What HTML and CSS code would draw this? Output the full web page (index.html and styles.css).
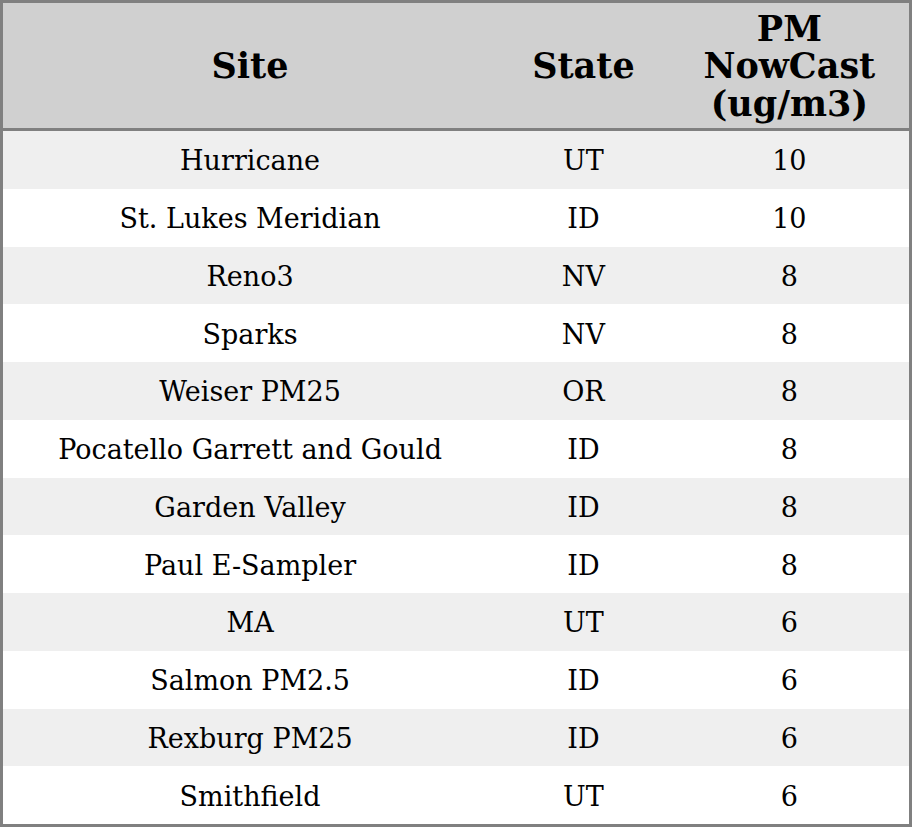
FILE: index.html
```html
<!DOCTYPE html>
<html>
<head>
<meta charset="utf-8">
<link rel="stylesheet" href="styles.css">
</head>
<body>
<table class="aq">
  <colgroup>
    <col class="c-site">
    <col class="c-state">
    <col class="c-pm">
  </colgroup>
  <thead>
    <tr><th>Site</th><th>State</th><th>PM<br>NowCast<br>(ug/m3)</th></tr>
  </thead>
  <tbody>
    <tr><td>Hurricane</td><td>UT</td><td>10</td></tr>
    <tr><td>St. Lukes Meridian</td><td>ID</td><td>10</td></tr>
    <tr><td>Reno3</td><td>NV</td><td>8</td></tr>
    <tr><td>Sparks</td><td>NV</td><td>8</td></tr>
    <tr><td>Weiser PM25</td><td>OR</td><td>8</td></tr>
    <tr><td>Pocatello Garrett and Gould</td><td>ID</td><td>8</td></tr>
    <tr><td>Garden Valley</td><td>ID</td><td>8</td></tr>
    <tr><td>Paul E-Sampler</td><td>ID</td><td>8</td></tr>
    <tr><td>MA</td><td>UT</td><td>6</td></tr>
    <tr><td>Salmon PM2.5</td><td>ID</td><td>6</td></tr>
    <tr><td>Rexburg PM25</td><td>ID</td><td>6</td></tr>
    <tr><td>Smithfield</td><td>UT</td><td>6</td></tr>
  </tbody>
</table>
</body>
</html>
```

FILE: styles.css
```css
html, body {
  margin: 0;
  padding: 0;
  background: #ffffff;
}

.aq {
  width: 912px;
  border-collapse: collapse;
  border: 3px solid #808080;
  font-family: "DejaVu Serif", serif;
  color: #000;
  table-layout: fixed;
}

.c-site { width: 494px; }
.c-state { width: 172px; }
.c-pm { width: 240px; }

.aq th {
  background: #d0d0d0;
  font-size: 35px;
  font-weight: bold;
  line-height: 37.5px;
  height: 124px;
  padding: 1px 0 0 0;
  text-align: center;
  vertical-align: middle;
  border-bottom: 3px solid #808080;
}

.aq td {
  font-size: 27px;
  line-height: 32px;
  height: 54.75px;
  padding: 3px 0 0 0;
  text-align: center;
  vertical-align: middle;
}

.aq tbody tr:nth-child(odd) td {
  background: #efefef;
}

.aq tbody tr:nth-child(even) td {
  background: #ffffff;
}
```
